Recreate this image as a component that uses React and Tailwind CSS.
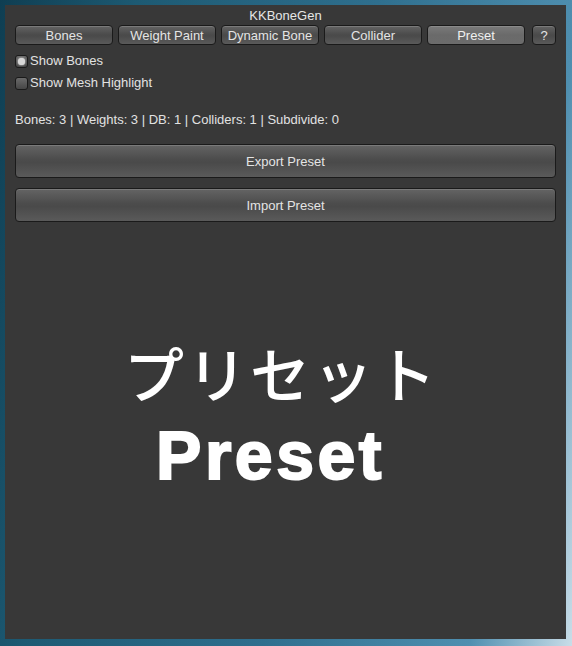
import { useState } from 'react';

const TABS = ['Bones', 'Weight Paint', 'Dynamic Bone', 'Collider', 'Preset'];

// Unity-IMGUI style button skin
const btnSkin =
  'border border-[#1a1a1a] rounded-[4px] text-[#e4e4e4] shadow-[inset_0_1px_0_#7a7a7a] bg-[linear-gradient(to_bottom,#646464_0%,#4c4c4c_45%,#4a4a4a_55%,#5a5a5a_100%)]';
const btnActive =
  'border border-[#1a1a1a] rounded-[4px] text-[#f0f0f0] shadow-[inset_0_1px_0_#8a8a8a] bg-[linear-gradient(to_bottom,#7a7a7a_0%,#6a6a6a_50%,#6c6c6c_100%)]';

function Toggle({ checked, label, onClick }) {
  return (
    <button type="button" onClick={onClick} className="flex items-center h-[22px] pl-[10px] text-[13px] text-[#e2e2e2]">
      <span className="w-[13px] h-[13px] rounded-[3px] border border-[#1a1a1a] bg-[linear-gradient(to_bottom,#6a6a6a,#464646)] mr-[2px] flex items-center justify-center">
        {checked && <span className="w-[7px] h-[7px] rounded-full bg-[#d8d8d8] shadow-[0_0_2px_#ffffff]" />}
      </span>
      {label}
    </button>
  );
}

export default function App() {
  const [tab, setTab] = useState('Preset');
  const [showBones, setShowBones] = useState(true);
  const [showMesh, setShowMesh] = useState(false);

  return (
    <div
      className="w-[572px] h-[646px] overflow-hidden pt-[5px] pl-[5px] bg-[linear-gradient(100deg,#0f3e52_0%,#1d5a73_20%,#2f6f8e_55%,#4f8fb0_85%,#c9dde8_100%)]"
      style={{ fontFamily: '"Liberation Sans", Arial, sans-serif' }}
    >
      <div className="w-[561px] h-[634px] bg-[#383838] flex flex-col">
        {/* window title */}
        <div className="h-[20px] pt-[2px] flex items-center justify-center text-[13px] text-[#e6e6e6]">KKBoneGen</div>

        {/* tab bar */}
        <div className="flex gap-[5px] px-[10px] h-[20px]">
          {TABS.map((t) => (
            <button
              key={t}
              type="button"
              onClick={() => setTab(t)}
              className={`w-[98px] h-[20px] text-[13px] leading-none flex items-center justify-center ${tab === t ? btnActive : btnSkin}`}
            >
              {t}
            </button>
          ))}
          <button type="button" className={`w-[24px] h-[20px] ml-[2px] text-[13px] leading-none flex items-center justify-center ${btnSkin}`}>
            ?
          </button>
        </div>

        <div className="mt-[5px] flex flex-col items-start">
          <Toggle checked={showBones} label="Show Bones" onClick={() => setShowBones(!showBones)} />
          <Toggle checked={showMesh} label="Show Mesh Highlight" onClick={() => setShowMesh(!showMesh)} />
        </div>

        <div className="mt-[16px] h-[20px] flex items-center px-[10px] text-[13px] text-[#e2e2e2]">
          Bones: 3 | Weights: 3 | DB: 1 | Colliders: 1 | Subdivide: 0
        </div>

        <div className="mt-[14px] px-[10px] flex flex-col gap-[10px]">
          <button type="button" className={`h-[34px] w-full pt-[2px] text-[13px] ${btnSkin}`}>Export Preset</button>
          <button type="button" className={`h-[34px] w-full pt-[2px] text-[13px] ${btnSkin}`}>Import Preset</button>
        </div>

        {/* section label */}
        <div
          className="mt-[120px] h-[60px] leading-[60px] text-center pr-[8px] text-[60px] font-medium tracking-[3px] text-white"
          style={{ fontFamily: '"Noto Sans CJK JP", "Noto Sans CJK SC", sans-serif' }}
        >
          プリセット
        </div>
        <div className="mt-[19px] h-[68px] leading-[68px] text-center pr-[30px] text-[68px] font-bold tracking-[3.5px] [-webkit-text-stroke:2px_white] text-white">
          Preset
        </div>
      </div>
    </div>
  );
}
